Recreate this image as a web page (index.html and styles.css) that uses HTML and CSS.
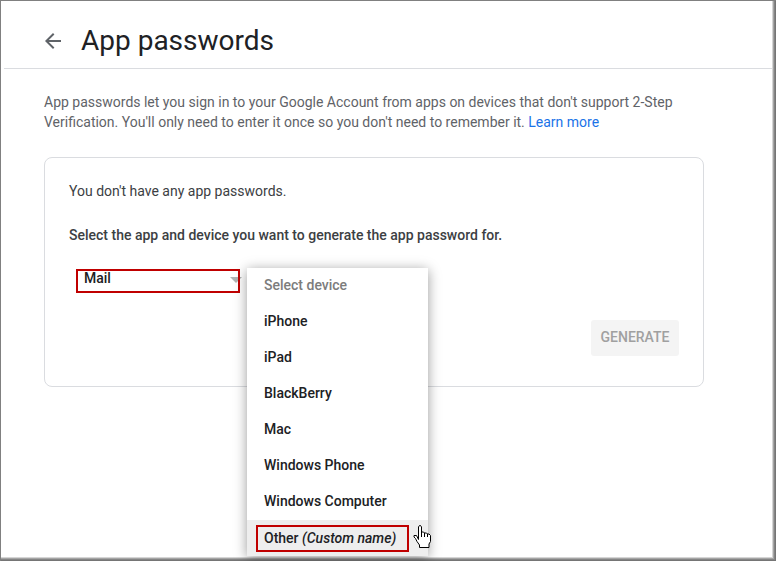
FILE: index.html
```html
<!DOCTYPE html>
<html lang="en">
<head>
  <meta charset="UTF-8">
  <meta name="viewport" content="width=device-width, initial-scale=1.0">
  <title>App passwords</title>
  <link rel="stylesheet" href="styles.css">
</head>
<body>

<header class="header">
  <a class="back" href="#" aria-label="Back">
    <svg width="24" height="24" viewBox="0 0 24 24" fill="currentColor">
      <path d="M20 11H7.83l5.59-5.59L12 4l-8 8 8 8 1.41-1.41L7.83 13H20v-2z"/>
    </svg>
  </a>
  <h1>App passwords</h1>
</header>

<main class="content">
  <p class="intro">App passwords let you sign in to your Google Account from apps on devices that don't support 2-Step Verification. You'll only need to enter it once so you don't need to remember it. <a href="#">Learn more</a></p>

  <section class="card">
    <p>You don't have any app passwords.</p>
    <h2>Select the app and device you want to generate the app password for.</h2>

    <div class="pickers">
      <div class="app-picker">
        <select aria-label="Select app">
          <option>Mail</option>
          <option>Calendar</option>
          <option>Contacts</option>
        </select>
        <svg class="arrow" width="12" height="6" viewBox="0 0 12 6"><path d="M0 0h12L6 6z" fill="#b0b3b3"/></svg>
      </div>

      <div class="device-picker">
        <ul class="menu">
          <li><button type="button" class="placeholder">Select device</button></li>
          <li><button type="button">iPhone</button></li>
          <li><button type="button">iPad</button></li>
          <li><button type="button">BlackBerry</button></li>
          <li><button type="button">Mac</button></li>
          <li><button type="button">Windows Phone</button></li>
          <li><button type="button">Windows Computer</button></li>
          <li>
            <button type="button" class="active"><span class="marked">Other <em>(Custom name)</em></span></button>
            <svg class="pointer" width="18" height="23" viewBox="0 0 18 23">
              <path d="M5.500 14.500V2L6.500 .5h1L8.500 2v5h2l1 1h2l1 1h1.500l1.500 1.500v6l-1.500 2.500v3.500h-9.500v-2.500l-2.500-3.500-1.500-3-1.500-1.500v-1.500h2.500z" fill="#fff" stroke="#000"/>
              <path d="M8.500 7v5M11.500 8v4M14.500 9v3" stroke="#000"/>
            </svg>
          </li>
        </ul>
      </div>
    </div>

    <div class="actions">
      <button type="button" class="generate" disabled>GENERATE</button>
    </div>
  </section>
</main>

</body>
</html>
```
FILE: styles.css
```css
* {
  box-sizing: border-box;
}
body {
  margin: 0;
  min-height: 100vh;
  font-family: Roboto, sans-serif;
  font-size: 14px;
  line-height: 20px;
  color: #3c4043;
  background-color: #fff;
  border-left: 1px solid #808080;
  border-top: 1px solid #808080;
  box-shadow: inset -1px -1px #757575, inset -2px -2px #858585, inset -3px -3px #a5a5a5, inset -4px -4px #d5d5d5;
}
h1, h2, p, ul {
  margin: 0;
  padding: 0;
}
.header {
  display: flex;
  align-items: center;
  gap: 16px;
  height: 68px;
  margin: 0 4px 0 3px;
  padding: 12px 37px 0;
  border-bottom: 1px solid #dadce0;
}
.header h1 {
  font-size: 28px;
  font-weight: 400;
  line-height: 36px;
  color: #202124;
}
.back {
  display: flex;
  color: #5f6368;
}
.content {
  max-width: 746px;
  padding: 23px 43px 0;
}
.intro {
  color: #5f6368;
}
.intro a {
  color: #1a73e8;
  text-decoration: none;
}
.card {
  margin-top: 25px;
  padding: 23px 24px 30px;
  border: 1px solid #dadce0;
  border-radius: 8px;
}
.card h2 {
  margin-top: 24px;
  font-size: 14px;
  font-weight: 500;
}
.pickers {
  display: flex;
  gap: 7px;
  margin-top: 23px;
  padding-left: 7px;
}
.app-picker {
  position: relative;
  width: 164px;
  height: 24px;
  margin-top: 1px;
}
.app-picker select {
  display: block;
  width: 100%;
  height: 24px;
  padding: 0 6px 6px;
  font: inherit;
  line-height: 14px;
  font-weight: 500;
  color: #202124;
  background: none;
  border: 2px solid #c00000;
  border-radius: 0;
  appearance: none;
}
.arrow {
  position: absolute;
  right: -2px;
  top: 8px;
  z-index: -1;
}
.device-picker {
  position: relative;
}
.menu {
  position: absolute;
  left: 0;
  top: 0;
  width: 181px;
  list-style: none;
  background-color: #fff;
  box-shadow: 0 2px 12px rgba(0, 0, 0, 0.4);
}
.menu li {
  position: relative;
}
.menu button {
  display: flex;
  align-items: center;
  width: 100%;
  height: 36px;
  padding: 0 17px 2px;
  font: inherit;
  font-weight: 500;
  color: #202124;
  background: none;
  border: none;
  white-space: nowrap;
}
.menu .placeholder {
  color: #7c7c7c;
}
.menu .active {
  padding: 0 9px;
  background-color: #eee;
}
.marked {
  min-width: 153px;
  padding: 1px 6px 2px;
  border: 2px solid #c00000;
  text-align: left;
}
.pointer {
  position: absolute;
  right: -3px;
  top: 5px;
  fill: none;
}
.actions {
  display: flex;
  justify-content: flex-end;
  margin-top: 27px;
}
.generate {
  min-width: 88px;
  height: 36px;
  padding: 0 8px 2px;
  font: inherit;
  font-weight: 500;
  color: #a0a0a0;
  background-color: #f4f4f4;
  border: none;
  border-radius: 3px;
}
```
